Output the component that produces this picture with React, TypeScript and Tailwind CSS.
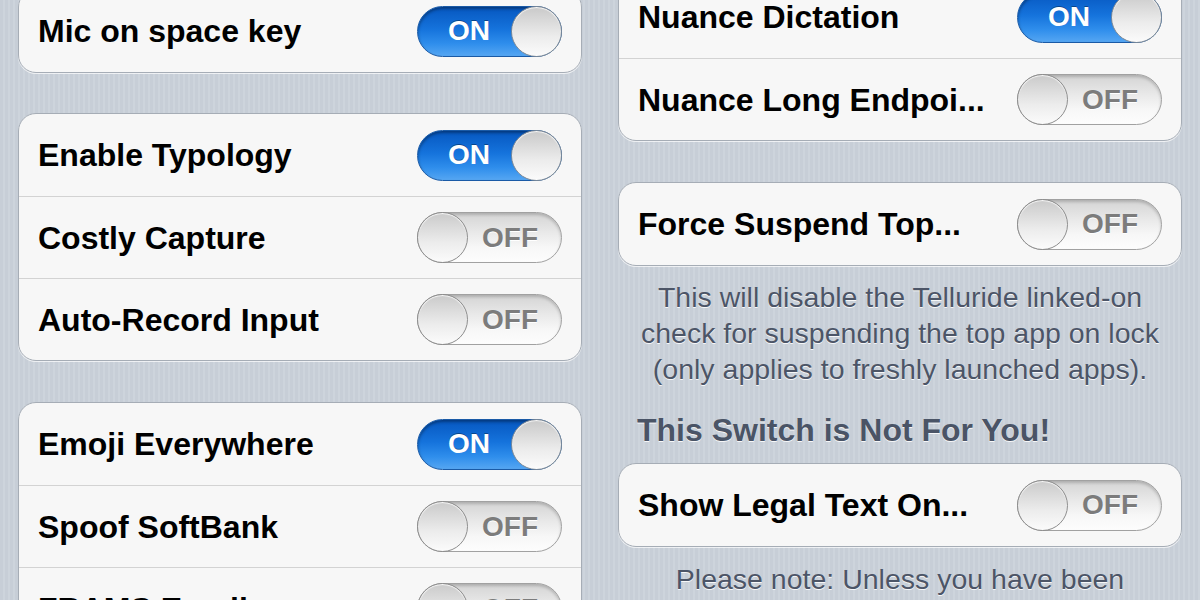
import React from "react";

const FONT = { fontFamily: '"Liberation Sans", Arial, Helvetica, sans-serif' };

function Toggle({ on }: { on: boolean }) {
  if (on) {
    return (
      <div className="relative w-[145px] h-[51px] shrink-0 rounded-full border border-[#1a5aa6] bg-[linear-gradient(to_bottom,#0657c0_0%,#1573dc_45%,#2f8eec_75%,#55a6f2_100%)] shadow-[inset_0_2px_3px_rgba(0,0,0,0.35)] flex items-center">
        <span className="w-[94px] pl-[8px] text-center text-white font-bold text-[28px] leading-none [text-shadow:0_-1px_0_rgba(0,0,0,0.35)]">
          ON
        </span>
        <div className="absolute right-[-1px] top-[-1px] w-[51px] h-[51px] rounded-full border border-[#7f8a96] bg-[linear-gradient(to_bottom,#c9c9c9,#ececec_60%,#fbfbfb)] shadow-[inset_0_1px_1px_rgba(255,255,255,0.9)]" />
      </div>
    );
  }
  return (
    <div className="relative w-[145px] h-[51px] shrink-0 rounded-full border border-[#a1a1a1] bg-[linear-gradient(to_bottom,#d4d4d4_0%,#e9e9e9_40%,#f7f7f7_70%,#fdfdfd_100%)] shadow-[inset_0_2px_3px_rgba(0,0,0,0.18)] flex items-center justify-end">
      <div className="absolute left-[-1px] top-[-1px] w-[51px] h-[51px] rounded-full border border-[#8d8d8d] bg-[linear-gradient(to_bottom,#cacaca,#ececec_60%,#fbfbfb)] shadow-[inset_0_1px_1px_rgba(255,255,255,0.9)]" />
      <span className="w-[94px] pr-[8px] text-center text-[#7c7c7c] font-bold text-[28px] leading-none [text-shadow:0_1px_0_#fff]">
        OFF
      </span>
    </div>
  );
}

function Group({ rows, className = "" }: { rows: { label: string; on: boolean }[]; className?: string }) {
  return (
    <div
      className={
        "rounded-[18px] border border-[#a6adb6] bg-[#f7f7f7] shadow-[0_1px_0_rgba(255,255,255,0.7)] overflow-hidden shrink-0 " +
        className
      }
    >
      {rows.map((r, i) => (
        <div
          key={i}
          className={
            "h-[82px] flex items-center justify-between pl-[19px] pr-[19px] " +
            (i > 0 ? "border-t border-[#d3d3d3]" : "")
          }
        >
          <span className="text-[32px] font-bold text-black leading-none whitespace-nowrap">{r.label}</span>
          <Toggle on={r.on} />
        </div>
      ))}
    </div>
  );
}

const stripes =
  "bg-[repeating-linear-gradient(90deg,#c7ced7_0px,#c7ced7_3px,#cdd4dc_3px,#cdd4dc_5px)]";

export default function App() {
  return (
    <div className="w-[1200px] h-[600px] overflow-hidden flex" style={FONT}>
      <div className={"w-[600px] h-[600px] overflow-hidden px-[18px] flex flex-col " + stripes}>
        <Group className="-mt-[11px]" rows={[{ label: "Mic on space key", on: true }]} />
        <Group
          className="mt-[40px] h-[248px]"
          rows={[
            { label: "Enable Typology", on: true },
            { label: "Costly Capture", on: false },
            { label: "Auto-Record Input", on: false },
          ]}
        />
        <Group
          className="mt-[41px]"
          rows={[
            { label: "Emoji Everywhere", on: true },
            { label: "Spoof SoftBank", on: false },
            { label: "FRAMS Emoji", on: false },
          ]}
        />
      </div>
      <div className={"w-[600px] h-[600px] overflow-hidden px-[18px] flex flex-col " + stripes}>
        <Group
          className="-mt-[25px]"
          rows={[
            { label: "Nuance Dictation", on: true },
            { label: "Nuance Long Endpoi...", on: false },
          ]}
        />
        <Group className="mt-[41px]" rows={[{ label: "Force Suspend Top...", on: false }]} />
        <div className="mt-[13px] text-center text-[28.5px] leading-[36px] text-[#4c5567] [text-shadow:0_1px_0_rgba(255,255,255,0.85)]">
          <div>This will disable the Telluride linked-on</div>
          <div>check for suspending the top app on lock</div>
          <div>(only applies to freshly launched apps).</div>
        </div>
        <div className="mt-[25px] pl-[19px] text-[32px] font-bold leading-[36px] text-[#4a5466] [text-shadow:0_1px_0_rgba(255,255,255,0.85)]">
          This Switch is Not For You!
        </div>
        <Group className="mt-[15px]" rows={[{ label: "Show Legal Text On...", on: false }]} />
        <div className="mt-[14px] text-center text-[28.5px] leading-[36px] text-[#4c5567] [text-shadow:0_1px_0_rgba(255,255,255,0.85)]">
          <div>Please note: Unless you have been</div>
        </div>
      </div>
    </div>
  );
}
